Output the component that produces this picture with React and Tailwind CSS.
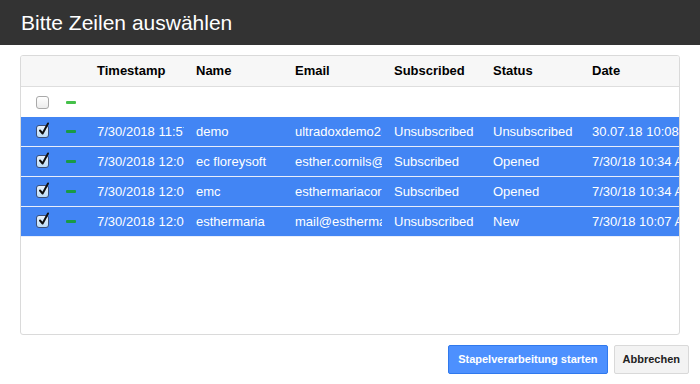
import React from "react";

const rows = [
  ["7/30/2018 11:57:12", "demo", "ultradoxdemo2@gmail.com", "Unsubscribed", "Unsubscribed", "30.07.18 10:08"],
  ["7/30/2018 12:01:33", "ec floreysoft", "esther.cornils@floreysoft.net", "Subscribed", "Opened", "7/30/18 10:34 AM"],
  ["7/30/2018 12:02:10", "emc", "esthermariacornils@gmail.com", "Subscribed", "Opened", "7/30/18 10:34 AM"],
  ["7/30/2018 12:03:41", "esthermaria", "mail@esthermaria.de", "Unsubscribed", "New", "7/30/18 10:07 AM"],
];

const headers = ["Timestamp", "Name", "Email", "Subscribed", "Status", "Date"];

function Box({ checked }) {
  if (!checked) {
    return (
      <span className="block w-[13px] h-[13px] rounded-[3px] border border-[#a9a9a9] bg-gradient-to-b from-white to-[#ececec]" />
    );
  }
  return (
    <span className="relative block w-[13px] h-[13px] rounded-[3px] border border-[#3d4f75] bg-gradient-to-b from-[#e9f3fd] to-[#bcdcf7]">
      <svg className="absolute left-[1px] -top-[4px]" width="12" height="14" viewBox="0 0 12 14">
        <path d="M2 8.5 L4.6 11.5 L10 1.5" fill="none" stroke="#111" strokeWidth="2" strokeLinecap="round" strokeLinejoin="round" />
      </svg>
    </span>
  );
}

function Row({ cells, selected }) {
  return (
    <div
      className={
        "flex items-center h-[30px] " +
        (selected ? "bg-[#4285f4] text-white border-b border-[#e8eefb]" : "")
      }
    >
      <div className="w-[44px] flex justify-center">
        <Box checked={selected} />
      </div>
      <div className="w-[21px] pl-[2px]">
        <span className={"block w-[10px] h-[3px] rounded-[1px] " + (selected ? "bg-[#189a45]" : "bg-[#45c04a]")} />
      </div>
      {cells.map((c, i) => (
        <div key={i} className="w-[99px] pl-[12px] shrink-0 overflow-hidden whitespace-nowrap text-[13px]">
          <div className="w-[87px] overflow-hidden">{c}</div>
        </div>
      ))}
    </div>
  );
}

export default function App() {
  return (
    <div className="w-[700px] h-[384px] bg-white flex flex-col font-['Liberation_Sans',Arial,sans-serif] text-[#222]">
      <div className="h-[45px] bg-[#333333] flex items-center px-[21px]">
        <h1 className="text-white text-[21px] leading-none">Bitte Zeilen auswählen</h1>
      </div>

      <div className="mx-[20px] mt-[10px] w-[660px] h-[280px] border border-[#dadada] rounded-[3px] overflow-hidden">
        <div className="flex items-center h-[31px] bg-[#f7f7f7] border-b border-[#dedede]">
          <div className="w-[65px]" />
          {headers.map((h) => (
            <div key={h} className="w-[99px] pl-[12px] shrink-0 font-bold text-[13px] text-black">
              {h}
            </div>
          ))}
        </div>
        <Row cells={["", "", "", "", "", ""]} selected={false} />
        {rows.map((r, i) => (
          <Row key={i} cells={r} selected />
        ))}
      </div>

      <div className="flex justify-end gap-[6px] mt-[10px] mr-[11px]">
        <button className="h-[29px] px-[9px] rounded-[2px] bg-[#4d90fe] border border-[#3079ed] text-white font-bold text-[11px]">
          Stapelverarbeitung starten
        </button>
        <button className="h-[29px] px-[8px] rounded-[2px] bg-[#f3f3f3] border border-[#d9d9d9] text-[#222] font-bold text-[11px]">
          Abbrechen
        </button>
      </div>
    </div>
  );
}
